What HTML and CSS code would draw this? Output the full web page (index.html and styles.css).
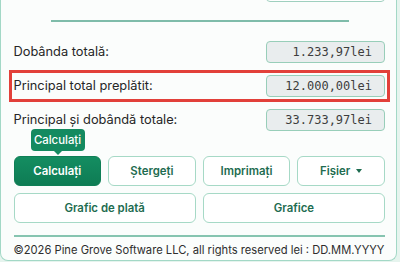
FILE: index.html
```html
<!DOCTYPE html>
<html lang="ro">
<head>
<meta charset="utf-8">
<link rel="stylesheet" href="styles.css">
</head>
<body>
<div class="card">
  <div class="top-input"></div>
  <div class="sep"></div>
  <div class="row first">
    <span class="label">Dobânda totală:</span>
    <div class="field">1.233,97lei</div>
  </div>
  <div class="row hl">
    <span class="label">Principal total preplătit:</span>
    <div class="field">12.000,00lei</div>
  </div>
  <div class="row">
    <span class="label">Principal și dobândă totale:</span>
    <div class="field">33.733,97lei</div>
  </div>
  <div class="btns four">
    <div class="btn primary">Calculați<span class="tip">Calculați</span></div>
    <div class="btn">Ștergeți</div>
    <div class="btn">Imprimați</div>
    <div class="btn">Fișier <span class="caret"></span></div>
  </div>
  <div class="btns two">
    <div class="btn">Grafic de plată</div>
    <div class="btn">Grafice</div>
  </div>
  <div class="foot-line"></div>
  <div class="footer">©2026 Pine Grove Software LLC, all rights reserved lei : DD.MM.YYYY</div>
</div>
</body>
</html>
```
FILE: styles.css
```css
html, body {
  margin: 0;
  padding: 0;
}
body {
  background: #e6f4ee;
  font-family: Inter, "Noto Sans", sans-serif;
  width: 400px;
  height: 262px;
  overflow: hidden;
}
.card {
  display: flow-root;
  width: 397px;
  box-sizing: border-box;
  height: 261px;
  background: #fbfdfc;
  border: 1.5px solid #a3d8c6;
  border-top: none;
  border-radius: 0 0 8px 8px;
  padding: 0 11px 0 12.5px;
}
.top-input {
  margin-top: -20px;
  margin-left: auto;
  width: 119px;
  height: 22px;
  box-sizing: border-box;
  border: 1px solid #9fd0bf;
  border-radius: 4px;
  background: #fff;
}
.sep {
  height: 1.5px;
  background: #7fbcaa;
  margin: 18px 36px 0 37px;
}
.row {
  display: flex;
  justify-content: space-between;
  align-items: center;
  height: 22px;
  margin-top: 12px;
}
.row.first {
  margin-top: 19px;
}
.row.hl {
  outline: 3px solid #e2403a;
  outline-offset: 2px;
}
.label {
  font-size: 12.8px;
  color: #262626;
}
.field {
  width: 119px;
  height: 22px;
  box-sizing: border-box;
  border: 1px solid #98ceb9;
  border-radius: 4px;
  background: #e9edee;
  font-family: "DejaVu Sans Mono", monospace;
  font-size: 12px;
  color: #3d3d3d;
  text-align: right;
  padding-right: 12px;
  line-height: 20px;
}
.btns {
  display: grid;
  gap: 7px;
}
.btns.four {
  grid-template-columns: repeat(4, 1fr);
  margin-top: 25px;
}
.btns.two {
  grid-template-columns: repeat(2, 1fr);
  margin-top: 7px;
}
.btn {
  position: relative;
  height: 30px;
  box-sizing: border-box;
  border: 1px solid #a6d9c6;
  border-radius: 6px;
  background: #fff;
  color: #1e6c50;
  font-size: 11.4px;
  font-weight: 600;
  display: flex;
  align-items: center;
  justify-content: center;
  gap: 6px;
}
.btn.primary {
  background: linear-gradient(#148d61, #0e7c54);
  border-color: #0f7f56;
  color: #fff;
}
.tip {
  position: absolute;
  left: 16px;
  top: -28px;
  width: 54px;
  height: 22px;
  background: #148a60;
  border-radius: 4px;
  color: #fff;
  font-size: 11.4px;
  font-weight: 500;
  display: flex;
  align-items: center;
  justify-content: center;
}
.tip::after {
  content: "";
  position: absolute;
  left: 23px;
  bottom: -4px;
  border-left: 4px solid transparent;
  border-right: 4px solid transparent;
  border-top: 4px solid #148a60;
}
.caret {
  width: 0;
  height: 0;
  border-left: 3.5px solid transparent;
  border-right: 3.5px solid transparent;
  border-top: 4px solid #1e6c50;
}
.foot-line {
  height: 2px;
  background: #86c4b0;
  margin-top: 12px;
}
.footer {
  padding-top: 4px;
  font-size: 11.2px;
  line-height: 18px;
  color: #2e2e2e;
  white-space: nowrap;
}
```
